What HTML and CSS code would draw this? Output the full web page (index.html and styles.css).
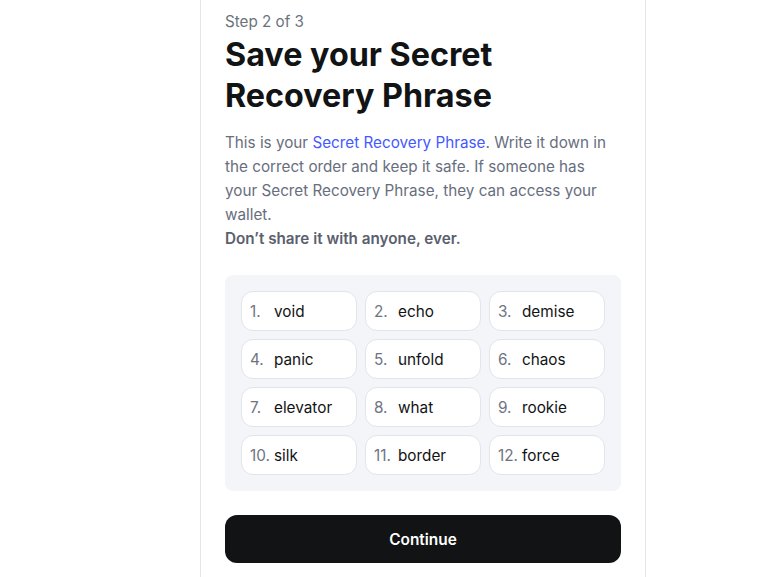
FILE: index.html
```html
<!DOCTYPE html>
<html lang="en">
<head>
<meta charset="utf-8">
<title>Save your Secret Recovery Phrase</title>
<link rel="stylesheet" href="styles.css">
</head>
<body>
<div class="card">
  <div class="step">Step 2 of 3</div>
  <h1 class="title">Save your Secret Recovery Phrase</h1>
  <p class="desc">This is your <span class="link">Secret Recovery Phrase</span>. Write it down in the correct order and keep it safe. If someone has your Secret Recovery Phrase, they can access your wallet.<br><strong class="warn">Don’t share it with anyone, ever.</strong></p>
  <div class="grid">
    <div class="pill"><span class="num">1.</span><span class="word">void</span></div>
    <div class="pill"><span class="num">2.</span><span class="word">echo</span></div>
    <div class="pill"><span class="num">3.</span><span class="word">demise</span></div>
    <div class="pill"><span class="num">4.</span><span class="word">panic</span></div>
    <div class="pill"><span class="num">5.</span><span class="word">unfold</span></div>
    <div class="pill"><span class="num">6.</span><span class="word">chaos</span></div>
    <div class="pill"><span class="num">7.</span><span class="word">elevator</span></div>
    <div class="pill"><span class="num">8.</span><span class="word">what</span></div>
    <div class="pill"><span class="num">9.</span><span class="word">rookie</span></div>
    <div class="pill"><span class="num">10.</span><span class="word">silk</span></div>
    <div class="pill"><span class="num">11.</span><span class="word">border</span></div>
    <div class="pill"><span class="num">12.</span><span class="word">force</span></div>
  </div>
  <button class="btn" type="button">Continue</button>
</div>
</body>
</html>
```

FILE: styles.css
```css
html, body {
  margin: 0;
  padding: 0;
  background: #ffffff;
  overflow: hidden;
}
body {
  font-family: Inter, "Noto Sans", sans-serif;
  color: #121314;
}
.card {
  margin-left: 200px;
  width: 396px;
  min-height: 600px;
  padding: 10px 24px 0;
  border-left: 1px solid #e4e6ea;
  border-right: 1px solid #e4e6ea;
}
.step {
  font-size: 15.2px;
  line-height: 24px;
  color: #6a737d;
}
.title {
  margin: 0;
  font-size: 32.3px;
  line-height: 41px;
  font-weight: 700;
  color: #121314;
}
.desc {
  margin: 15px 0 0;
  font-size: 15.25px;
  line-height: 24px;
  color: #686e7d;
}
.link {
  color: #4459ff;
}
.warn {
  font-weight: 600;
  color: #5a606d;
}
.grid {
  margin-top: 24px;
  padding: 16px;
  background: #f3f5f9;
  border-radius: 8px;
  display: grid;
  grid-template-columns: repeat(3, 1fr);
  gap: 8px;
}
.pill {
  height: 38px;
  display: flex;
  align-items: center;
  padding-left: 8px;
  background: #ffffff;
  border: 1px solid #e1e4ea;
  border-radius: 12px;
  font-size: 15.3px;
}
.num {
  min-width: 24px;
  color: #6f7480;
}
.word {
  color: #121314;
}
.btn {
  margin-top: 24px;
  width: 100%;
  height: 48px;
  border: 0;
  border-radius: 12px;
  background: #121314;
  color: #ffffff;
  font-family: Inter, "Noto Sans", sans-serif;
  font-size: 15.4px;
  font-weight: 600;
}
```
